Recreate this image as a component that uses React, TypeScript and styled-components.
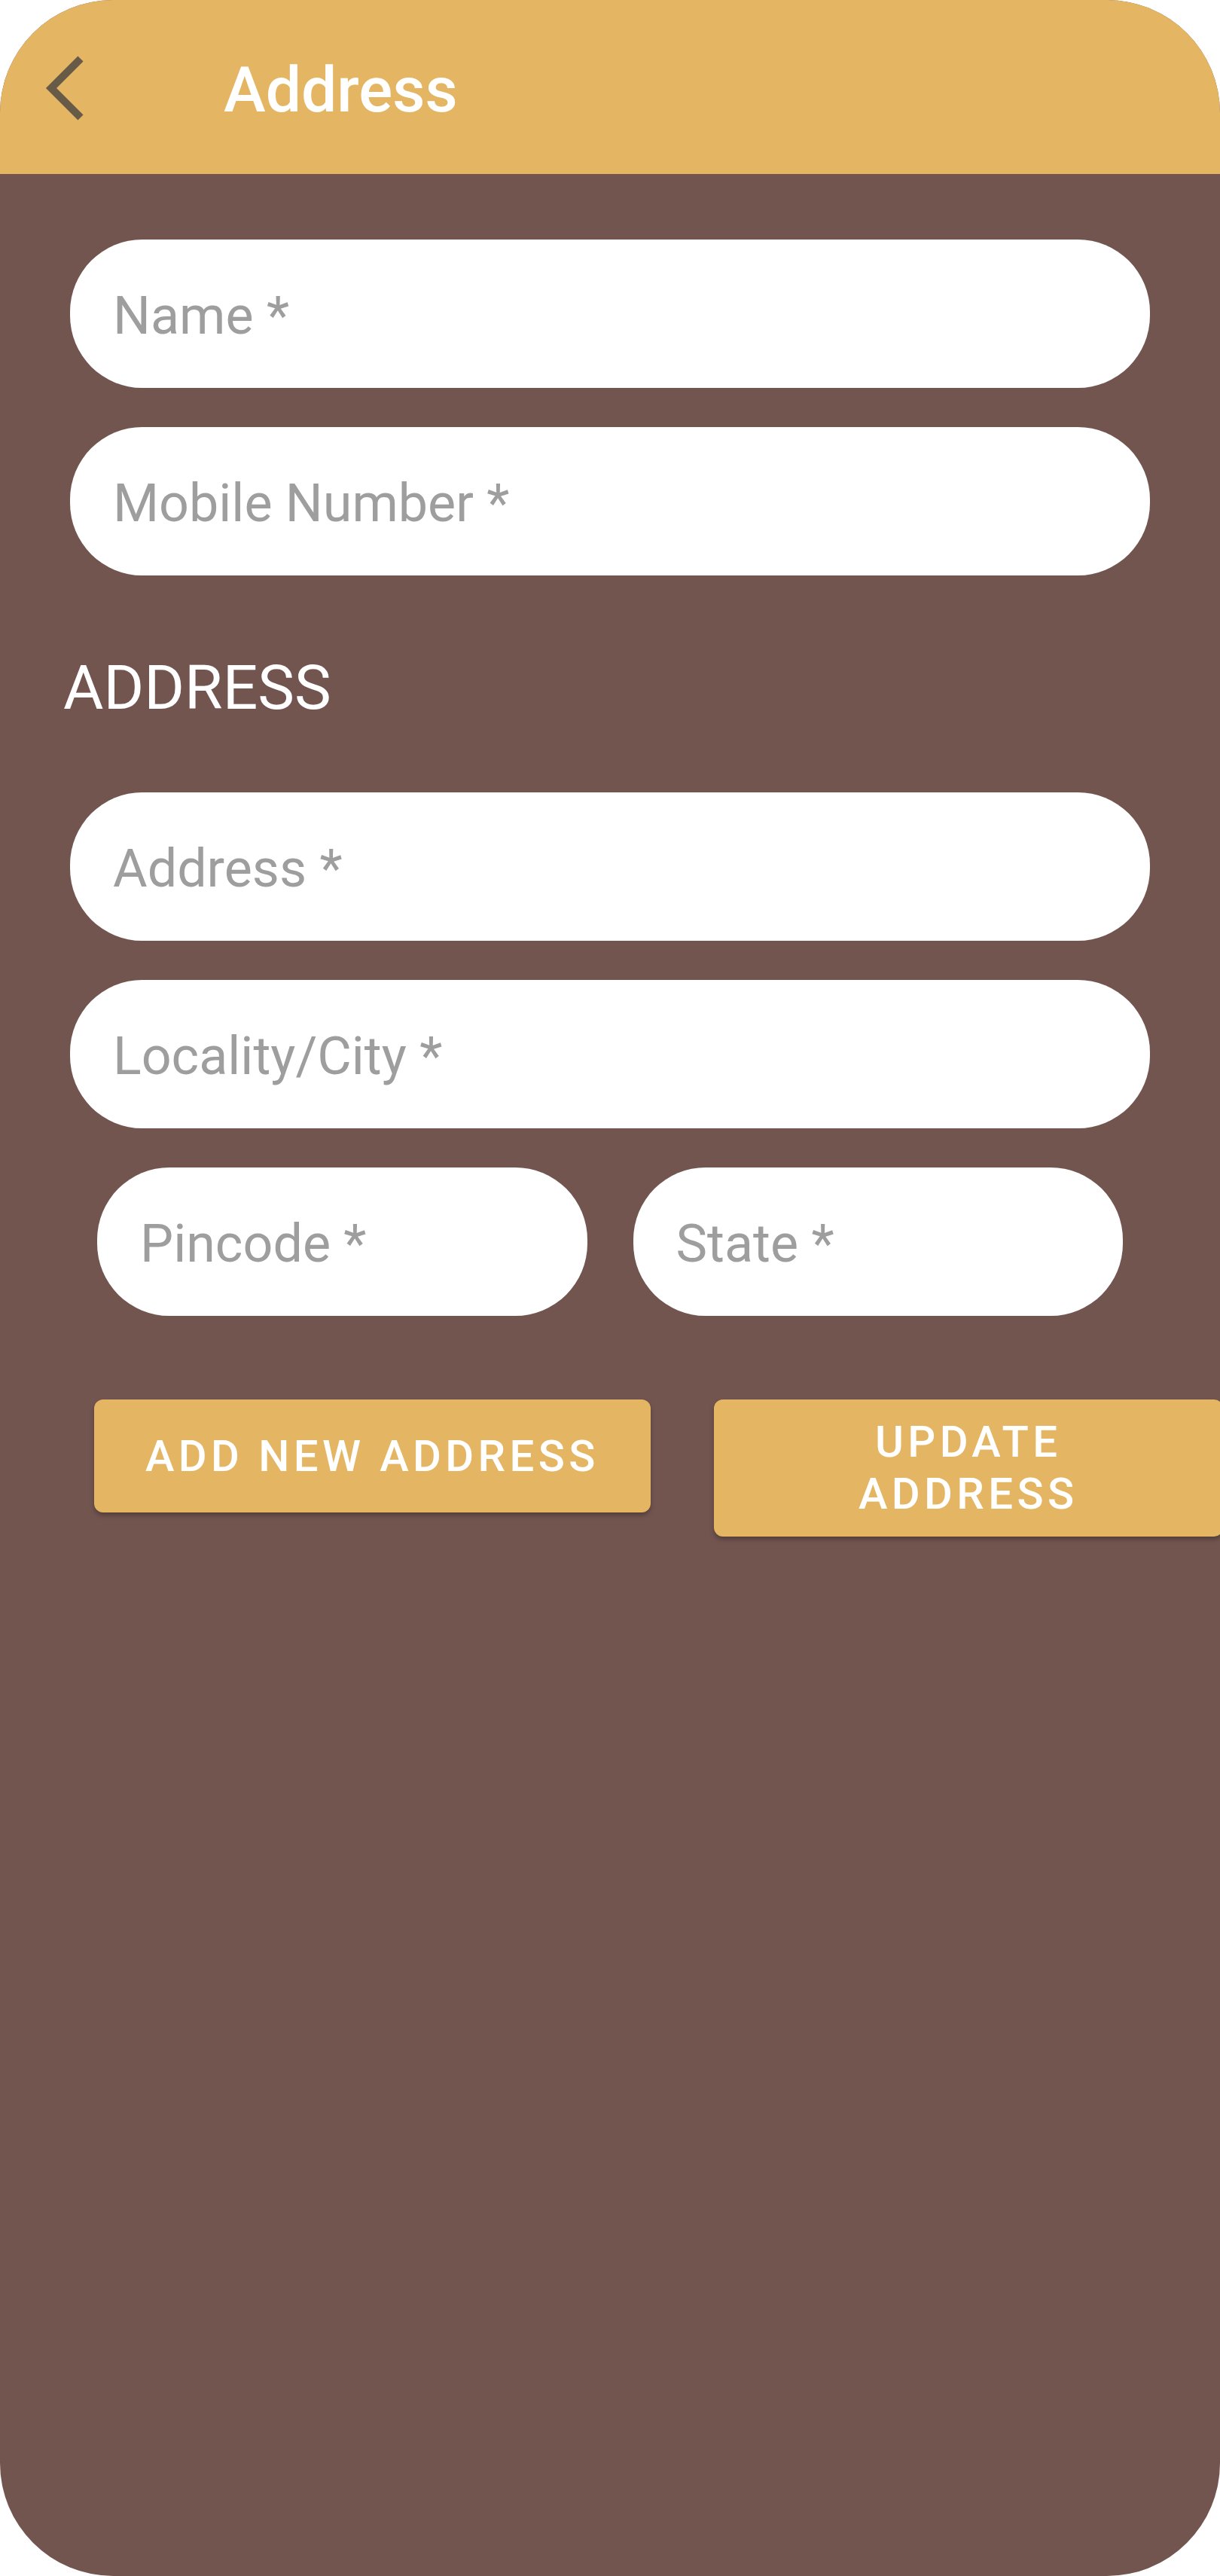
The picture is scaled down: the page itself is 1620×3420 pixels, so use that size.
import React from "react";
import styled, { createGlobalStyle } from "styled-components";

// === 스타일 정의 ===

const GlobalStyle = createGlobalStyle`
  html, body {
    margin: 0;
    padding: 0;
    background-color: #ffffff;
    font-family: Roboto, "Liberation Sans", Arial, sans-serif;
  }
`;

const Screen = styled.div`
  width: 1620px;
  height: 3420px;
  border-radius: 150px;
  overflow: hidden;
  background-color: #735550;
  display: flex;
  flex-direction: column;
`;

const Header = styled.header`
  height: 231px;
  flex: none;
  background-color: #e4b664;
  display: flex;
  align-items: center;
  padding-left: 60px;
`;

const BackButton = styled.button`
  width: 60px;
  height: 90px;
  padding: 0;
  border: none;
  background: none;
  display: flex;
  align-items: center;
  justify-content: center;
  cursor: pointer;
`;

const Title = styled.h1`
  margin: 8px 0 0 177px;
  font-size: 84px;
  font-weight: 500;
  color: #ffffff;
  line-height: 1;
`;

const Form = styled.main`
  display: flex;
  flex-direction: column;
  gap: 52px;
  padding: 87px 93px 0;
`;

const Field = styled.input`
  box-sizing: border-box;
  width: 100%;
  height: 197px;
  border: none;
  border-radius: 96px;
  background-color: #ffffff;
  padding: 4px 57px 0;
  font-family: Roboto, "Liberation Sans", Arial, sans-serif;
  font-size: 70px;
  color: #333333;
  outline: none;

  &::placeholder {
    color: #9e9e9e;
  }
`;

const SectionLabel = styled.h2`
  margin: 49px 0 39px -9px;
  font-size: 82px;
  font-weight: 400;
  color: #ffffff;
  line-height: 96px;
`;

const FieldRow = styled.div`
  display: flex;
  gap: 61px;
  padding: 0 36px;

  & > input {
    flex: 1;
    min-width: 0;
  }
`;

const ButtonRow = styled.div`
  display: flex;
  align-items: flex-start;
  gap: 84px;
  margin-top: 59px;
  padding-left: 32px;
`;

const ActionButton = styled.button<{ $width?: number }>`
  flex: none;
  box-sizing: border-box;
  width: ${(p) => (p.$width ? `${p.$width}px` : "auto")};
  min-height: 150px;
  padding: 22px 68px;
  border: none;
  border-radius: 12px;
  background-color: #e4b664;
  box-shadow: 0 4px 6px rgba(0, 0, 0, 0.28);
  color: #ffffff;
  font-family: Roboto, "Liberation Sans", Arial, sans-serif;
  font-size: 58px;
  font-weight: 500;
  letter-spacing: 5.4px;
  line-height: 69px;
  text-transform: uppercase;
  text-align: center;
  cursor: pointer;
`;

const ChevronIcon = () => (
  <svg width="60" height="90" viewBox="0 0 60 90">
    <polyline
      points="47,7 8,46 47,85"
      fill="none"
      stroke="#675b47"
      strokeWidth="10"
      strokeLinecap="butt"
      strokeLinejoin="miter"
    />
  </svg>
);

const App = () => {
  return (
    <>
      <GlobalStyle />
      <Screen>
        <Header>
          <BackButton aria-label="back">
            <ChevronIcon />
          </BackButton>
          <Title>Address</Title>
        </Header>

        <Form>
          <Field placeholder="Name *" />
          <Field placeholder="Mobile Number *" />

          <SectionLabel>ADDRESS</SectionLabel>

          <Field placeholder="Address *" />
          <Field placeholder="Locality/City *" />
          <FieldRow>
            <Field placeholder="Pincode *" />
            <Field placeholder="State *" />
          </FieldRow>

          <ButtonRow>
            <ActionButton>Add New Address</ActionButton>
            <ActionButton $width={676}>Update Address</ActionButton>
          </ButtonRow>
        </Form>
      </Screen>
    </>
  );
};

export default App;
